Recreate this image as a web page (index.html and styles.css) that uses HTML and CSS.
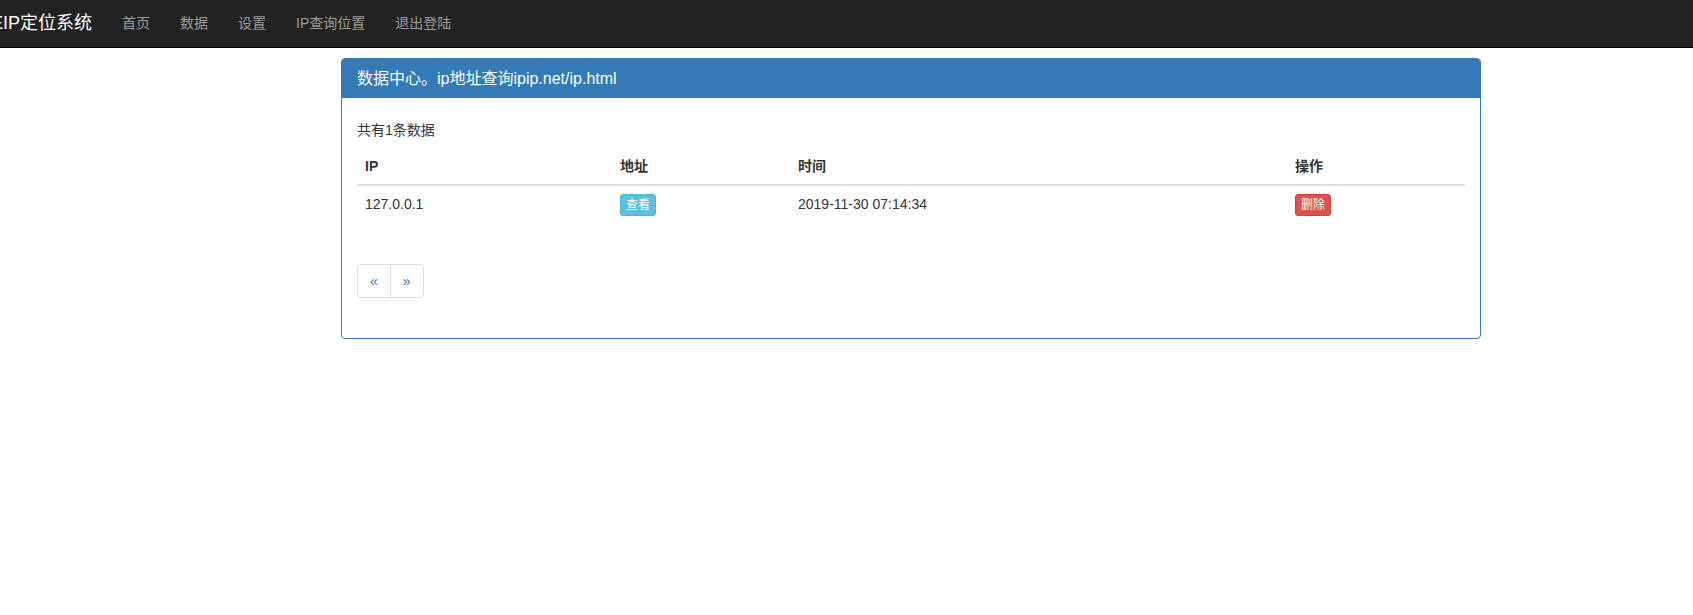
FILE: index.html
```html
<!DOCTYPE html>
<html lang="zh-CN">
<head>
<meta charset="utf-8">
<title>IP定位系统</title>
<link rel="stylesheet" href="styles.css">
</head>
<body>
<nav class="navbar">
  <a class="brand" href="#">EIP定位系统</a>
  <ul class="nav">
    <li><a href="#">首页</a></li>
    <li><a href="#">数据</a></li>
    <li><a href="#">设置</a></li>
    <li><a href="#">IP查询位置</a></li>
    <li><a href="#">退出登陆</a></li>
  </ul>
</nav>
<div class="container">
  <div class="panel">
    <div class="panel-heading">数据中心。ip地址查询ipip.net/ip.html</div>
    <div class="panel-body">
      <p class="summary">共有1条数据</p>
      <table class="table">
        <thead>
          <tr>
            <th class="col-ip">IP</th>
            <th class="col-addr">地址</th>
            <th class="col-time">时间</th>
            <th class="col-op">操作</th>
          </tr>
        </thead>
        <tbody>
          <tr>
            <td>127.0.0.1</td>
            <td><a class="btn btn-info" href="#">查看</a></td>
            <td>2019-11-30 07:14:34</td>
            <td><a class="btn btn-danger" href="#">删除</a></td>
          </tr>
        </tbody>
      </table>
      <ul class="pagination">
        <li><a href="#">&laquo;</a></li>
        <li><a href="#">&raquo;</a></li>
      </ul>
    </div>
  </div>
</div>
</body>
</html>
```
FILE: styles.css
```css
* { box-sizing: border-box; }
html, body {
  margin: 0;
  padding: 0;
  background: #fff;
  overflow: hidden;
}
body {
  font-family: "Liberation Sans", "Noto Sans CJK SC", sans-serif;
  font-size: 14px;
  line-height: 20px;
  color: #333;
}
a { text-decoration: none; }

.navbar {
  display: flex;
  align-items: center;
  height: 48px;
  background: #222;
  border-bottom: 1px solid #080808;
  overflow: hidden;
}
.brand {
  margin-left: -9px;
  padding-right: 15px;
  font-size: 18px;
  line-height: 47px;
  color: #fff;
  white-space: nowrap;
}
.nav {
  display: flex;
  margin: 0;
  padding: 0;
  list-style: none;
}
.nav a {
  display: block;
  padding: 0 15px;
  line-height: 47px;
  color: #9d9d9d;
  white-space: nowrap;
}

.container {
  width: 1170px;
  margin: 10px 0 0 326px;
  padding: 0 15px;
}
.panel {
  border: 1px solid #337ab7;
  border-radius: 4px;
  background: #fff;
}
.panel-heading {
  background: #337ab7;
  color: #fff;
  padding: 10px 15px;
  font-size: 16px;
  line-height: 19px;
  border-radius: 3px 3px 0 0;
}
.panel-body {
  padding: 15px;
}
.summary {
  margin: 7px 0 8px;
}
.table {
  width: 100%;
  border-collapse: collapse;
  border-spacing: 0;
  table-layout: fixed;
  margin-bottom: 20px;
}
.table th {
  text-align: left;
  font-weight: bold;
  padding: 8px;
  border-bottom: 2px solid #ddd;
}
.table td {
  padding: 8px;
  vertical-align: top;
}
.col-ip { width: 255px; }
.col-addr { width: 178px; }
.col-time { width: 497px; }
.col-op { width: 178px; }

.btn {
  display: inline-block;
  padding: 1px 5px;
  font-size: 12px;
  line-height: 18px;
  border-radius: 3px;
  border: 1px solid transparent;
  color: #fff;
  vertical-align: top;
}
.btn-info {
  background: #5bc0de;
  border-color: #46b8da;
}
.btn-danger {
  background: #d9534f;
  border-color: #d43f3a;
}

.pagination {
  display: inline-flex;
  vertical-align: top;
  margin: 20px 0 25px;
  padding: 0;
  list-style: none;
}
.pagination li a {
  display: block;
  padding: 6px 12px;
  line-height: 20px;
  color: #337ab7;
  border: 1px solid #ddd;
  background: #fff;
}
.pagination li:first-child a {
  border-radius: 4px 0 0 4px;
}
.pagination li + li a {
  margin-left: -1px;
  border-radius: 0 4px 4px 0;
}
```
